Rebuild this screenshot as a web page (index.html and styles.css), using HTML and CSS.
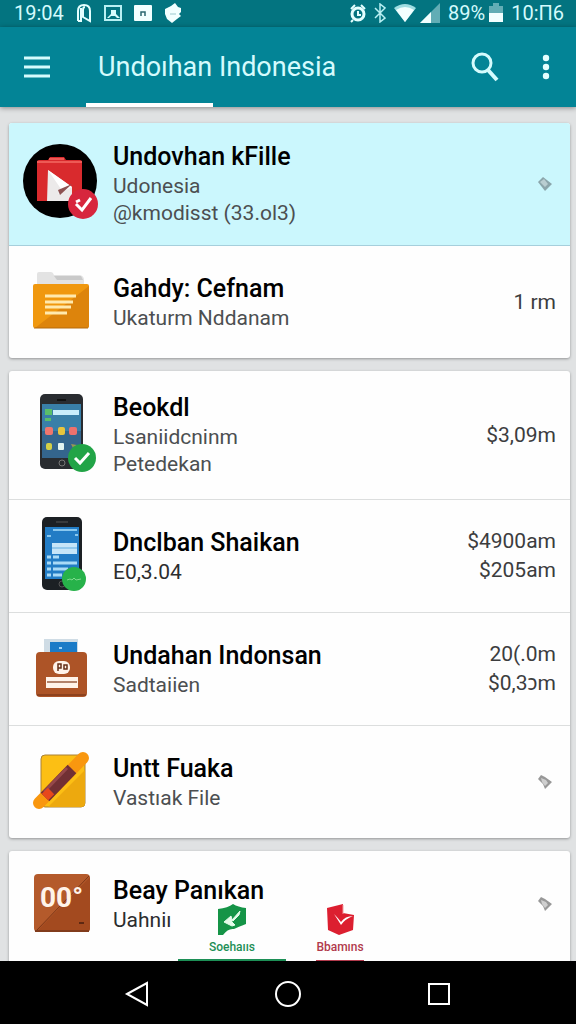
FILE: index.html
```
<!DOCTYPE html>
<html lang="id">
<head>
    <meta charset="utf-8">
    <meta name="viewport" content="width=device-width, initial-scale=1">
    <title>Undoıhan Indonesia</title>
    <link rel="stylesheet" href="styles.css">
</head>
<body>
    <div class="status-bar">
        <span>19:04</span>
        <svg class="gap-left" width="16" height="20" viewBox="0 0 16 20" fill="none" stroke="#e4ffff" stroke-width="2"><path d="M2 18V8q0-6 6-6t6 6v10l-7-4V7q0-3 2-3M5 5v13H2"/></svg>
        <svg class="gap-left" width="18" height="18" viewBox="0 0 18 18"><path d="M1 2h16v14H1z" fill="none" stroke="#b9f0f3" stroke-width="2"/><path d="M3 14l4-4V6h5v4l4 4h-3l-2-2H7l-2 2z" fill="#d5fbfd"/></svg>
        <svg class="gap-left" width="18" height="18" viewBox="0 0 18 18"><rect y="1" width="18" height="16" rx="1" fill="#f2ffff"/><path d="M7 12V8h4v4" fill="none" stroke="#2b6870" stroke-width="1.5"/></svg>
        <svg class="gap-left" width="18" height="20" viewBox="0 0 18 20"><path d="M1 6l6-3 4-3 3 4 3 1v4l-2 2 2 2-4 3-5 4-5-4-2-5z" fill="#f2ffff"/><path d="M6 11h6" stroke="#9ac8cd"/></svg>
        <span class="spacer"></span>
        <svg width="16" height="20" viewBox="0 0 16 20" fill="none" stroke="#e4ffff"><circle cx="8" cy="11" r="6" stroke-width="3"/><path d="M1 6l4-4M15 6l-4-4M3 17l-2 2M8 8v4h3" stroke-width="2"/></svg>
        <svg width="12" height="20" viewBox="0 0 12 20" fill="none" stroke="#b9f0f3" stroke-width="1.5"><path d="M1 5l10 10-5 4V1l5 4L1 15"/></svg>
        <svg width="22" height="18" viewBox="0 0 22 18"><path d="M0 4q11-8 22 0L11 18z" fill="#9fdde2"/><path d="M2 6q9-6 18 0l-9 12z" fill="#f2ffff"/></svg>
        <svg class="signal" width="20" height="20" viewBox="0 0 20 20"><path d="M0 20L20 0v20z" fill="#62adb5"/><path d="M0 20l11-11v11z" fill="#f2ffff"/></svg>
        <span>89%</span>
        <svg class="battery" width="14" height="20" viewBox="0 0 14 20"><path d="M4 0h6v3h4v7H0V3h4z" fill="#62adb5"/><path d="M0 10h14v9H0z" fill="#f2ffff"/></svg>
        <span>10:П6</span>
    </div>

    <header class="app-bar">
        <button class="icon-button" type="button" aria-label="Menu">
            <svg width="28" height="24" viewBox="0 0 28 24"><path d="M1 3h26M1 12h26M1 21h26" stroke="#d5fbfd" stroke-width="3"/></svg>
        </button>
        <h1>Undoıhan Indonesia</h1>
        <button class="icon-button" type="button" aria-label="Cari">
            <svg width="28" height="30" viewBox="0 0 28 30" fill="none" stroke="#d5fbfd"><circle cx="11" cy="11" r="9" stroke-width="3"/><path d="M17 18l9 10" stroke-width="4"/></svg>
        </button>
        <button class="icon-button more" type="button" aria-label="Lainnya">
            <svg width="8" height="26" viewBox="0 0 8 26" fill="#e4ffff"><circle cx="4" cy="4" r="3.2"/><circle cx="4" cy="13" r="3.2"/><circle cx="4" cy="22" r="3.2"/></svg>
        </button>
    </header>

    <main>
        <section class="card">
            <a class="row active" href="#">
                <svg class="picture" viewBox="0 0 76 80">
                    <circle cx="38" cy="37" r="37"/>
                    <path d="M15 18q0-2 2-2h9l2-3h14l2 3h14q2 0 2 2v39H15z" fill="#d92a2d"/>
                    <path d="M15 18h45M27 15h15" stroke="#ed5a55" stroke-width="2"/>
                    <path d="M26 26l24 17v14H25z" fill="#eceaea"/>
                    <path d="M26 26l24 17-14 7 3-5z" fill="#fff"/>
                    <path d="M36 46l14-6-12 11z" fill="#8d5252"/>
                    <circle cx="61" cy="60" r="15" fill="#d7263d"/>
                    <path d="M54 60l6 6 9-12M54 58l4-2" fill="none" stroke="#fff" stroke-width="3"/>
                </svg>
                <div class="text">
                    <h2>Undovhan kFille</h2>
                    <p>Udonesia</p>
                    <p>@kmodisst (33.ol3)</p>
                </div>
                <svg class="pointer" viewBox="0 0 16 14"><path d="M1 5l5-5 9 7-7 7z" fill="#8ba5ab"/><path d="M3 5l4-3 4 5-3 3z" fill="#b9cdd1"/></svg>
            </a>
            <a class="row" href="#">
                <svg class="picture" viewBox="0 0 76 80">
                    <path d="M15 25V12q0-2 2-2h12q2 0 3 3h26q4 1 4 5v7z" fill="#e3e3e3"/>
                    <path d="M32 14h27l2 4H35z" fill="#c9c9c9"/>
                    <rect x="11" y="22" width="56" height="44" rx="2" fill="#f0980f"/>
                    <path d="M67 24v40q0 2-2 2H13z" fill="#dd840c"/>
                    <path d="M12 66h54" stroke="#b66a0b"/>
                    <path d="M23 34h31M23 40h28M23 45h26M23 51h22" stroke="#ffe9ae" stroke-width="3"/>
                </svg>
                <div class="text">
                    <h2>Gahdy: Cefnam</h2>
                    <p>Ukaturm Nddanam</p>
                </div>
                <div class="amount">1 rm</div>
            </a>
        </section>

        <section class="card">
            <a class="row tall" href="#">
                <svg class="picture" viewBox="0 0 76 80">
                    <rect x="18" y="-1" width="43" height="75" rx="5" fill="#292c30"/>
                    <path d="M35 5h9" stroke="#111" stroke-width="2"/>
                    <path d="M20 9h39v54H20z" fill="#397fa8"/>
                    <path d="M20 36h39v27H20z" fill="#34658d"/>
                    <path d="M31 15h26v5H31z" fill="#c9edfb"/>
                    <path d="M23 14h7v6h-7zM23 23h6v3h-6z" fill="#5abf69"/>
                    <rect x="23" y="32" width="8" height="8" rx="2" fill="#f0766d"/>
                    <rect x="36" y="32" width="7" height="8" rx="2" fill="#e9c53d"/>
                    <rect x="47" y="32" width="8" height="8" rx="2" fill="#ee716d"/>
                    <rect x="24" y="48" width="6" height="7" rx="2" fill="#d2cf47"/>
                    <rect x="36" y="48" width="6" height="7" rx="1" fill="#e2f3f0"/>
                    <path d="M49 49l6 1-3 5z" fill="#9a9855"/>
                    <circle cx="40" cy="68" r="3" fill="none" stroke="#777"/>
                    <circle cx="60" cy="63" r="14" fill="#22a447"/>
                    <path d="M53 63l5 5 9-10" fill="none" stroke="#fff" stroke-width="3"/>
                </svg>
                <div class="text">
                    <h2>Beokdl</h2>
                    <p>Lsaniidcninm</p>
                    <p>Petedekan</p>
                </div>
                <div class="amount">$3,09m</div>
            </a>
            <a class="row" href="#">
                <svg class="picture" viewBox="0 0 76 80">
                    <rect x="20" y="1" width="40" height="73" rx="5" fill="#1c2024"/>
                    <path d="M34 6h12" stroke="#555"/>
                    <path d="M23 11h34v52H23z" fill="#227cc5"/>
                    <path d="M31 14h24M25 20h4M53 19h3" stroke="#8ac8ef" stroke-width="2"/>
                    <path d="M30 27h25v11H30z" fill="#c6e5f8"/>
                    <path d="M30 32h25" stroke="#93c9ec" stroke-width="2"/>
                    <path d="M25 41h4M31 41h6M25 47h4M31 47h24M25 53h4M31 53h15M25 59h4M31 59h9" stroke="#a9daf6" stroke-width="3"/>
                    <circle cx="40" cy="68" r="3" fill="none" stroke="#555"/>
                    <circle cx="52" cy="63" r="12" fill="#27b24a"/>
                    <path d="M45 64l3-1 2 1 2-2 2 2 5-1" fill="none" stroke="#7fda8e"/>
                </svg>
                <div class="text">
                    <h2>Dnclban Shaikan</h2>
                    <p class="dark">E0,3.04</p>
                </div>
                <div class="amount">$4900am<br>$205am</div>
            </a>
            <a class="row" href="#">
                <svg class="picture" viewBox="0 0 76 80">
                    <path d="M22 10h34v15H22z" fill="#cfdce5"/>
                    <path d="M28 13h27v12H28z" fill="#1b7bc7"/>
                    <path d="M37 19h3" stroke="#a3d6f8" stroke-width="2"/>
                    <rect x="14" y="23" width="51" height="45" rx="4" fill="#ad5427"/>
                    <path d="M15 66h49" stroke="#8e421e" stroke-width="2"/>
                    <rect x="31" y="32" width="17" height="13" rx="6" fill="#fff3e9"/>
                    <path d="M36 42v-7h3v4h-3M42 36h3v4h-3z" fill="none" stroke="#663019" stroke-width="1.5"/>
                    <path d="M24 48h32v11H24z" fill="#fff3e9"/>
                    <path d="M25 53h30" stroke="#b2826a" stroke-width="2"/>
                </svg>
                <div class="text">
                    <h2>Undahan Indonsan</h2>
                    <p>Sadtaiien</p>
                </div>
                <div class="amount">20(.0m<br>$0,3ɔm</div>
            </a>
            <a class="row" href="#">
                <svg class="picture" viewBox="0 0 76 80">
                    <rect x="19" y="13" width="44" height="52" rx="4" fill="#fcbf14" stroke="#aa8237"/>
                    <path d="M63 28v33q0 4-4 4H26z" fill="#eda90e"/>
                    <path d="M17 61l44-45" stroke="#f9970f" stroke-width="12" stroke-linecap="round"/>
                    <path d="M23 55l27-28" stroke="#713034" stroke-width="12"/>
                    <path d="M22 50l23-24" stroke="#95484b" stroke-width="3"/>
                    <path d="M23 55l6-6" stroke="#e7471c" stroke-width="9"/>
                </svg>
                <div class="text">
                    <h2>Untt Fuaka</h2>
                    <p>Vastıak File</p>
                </div>
                <svg class="pointer" viewBox="0 0 16 14"><path d="M1 4l3-4 4 2 7 5-7 7-2-5z" fill="#989898"/><path d="M4 3l5 2 2 3-3 3-3-4z" fill="#cfcfcf"/></svg>
            </a>
        </section>

        <section class="card">
            <a class="row last" href="#">
                <svg class="picture" viewBox="0 0 76 80">
                    <rect x="12" y="10" width="56" height="58" rx="4" fill="#b45a2b"/>
                    <path d="M68 13v51q0 4-4 4H14z" fill="#a34a1f"/>
                    <path d="M14 67l53-55" stroke="#7d3617"/>
                    <path d="M13 67h54" stroke="#813b1b" stroke-width="2"/>
                    <text class="badge-text" x="18" y="43">00°</text>
                    <path d="M57 59h5" stroke="#5e2812" stroke-width="2"/>
                </svg>
                <div class="text">
                    <h2>Beay Panıkan</h2>
                    <p class="dark">Uahniı</p>
                </div>
                <svg class="pointer" viewBox="0 0 16 14"><path d="M1 4l3-4 4 2 7 5-7 7-2-5z" fill="#989898"/><path d="M4 3l5 2 2 3-3 3-3-4z" fill="#cfcfcf"/></svg>
            </a>
        </section>

        <div class="tabs">
            <button class="tab green" type="button">
                <svg width="30" height="32" viewBox="0 0 30 32"><path d="M1 6q10-1 15-5 5 3 13 4v16q-8 3-12 5-6-1-11 6H1z" fill="#159447"/><path d="M7 19l7-6 1 4 8-9-1 4-6 6-3-1 5 5-3 1z" fill="#e4fbe9" stroke="#e4fbe9"/></svg>
                Soehaııs
            </button>
            <button class="tab red" type="button">
                <svg width="30" height="32" viewBox="0 0 30 32"><path d="M2 5l16-4v9l11 2-1 15-14 5-11-5z" fill="#dc1f30"/><path d="M9 11q4 4 7 8 4-6 12-6-8 3-12 9z" fill="#fff"/><path d="M18 2v9" stroke="#f49b9e"/></svg>
                Bbamıns
            </button>
        </div>
    </main>

    <nav class="nav-bar">
        <button type="button" aria-label="Kembali"><svg width="26" height="26" viewBox="0 0 26 26"><path d="M3 13L23 2v22z"/></svg></button>
        <button type="button" aria-label="Beranda"><svg width="26" height="26" viewBox="0 0 26 26"><circle cx="13" cy="13" r="12"/></svg></button>
        <button type="button" aria-label="Terbaru"><svg width="26" height="26" viewBox="0 0 26 26"><rect x="3" y="3" width="20" height="20"/></svg></button>
    </nav>
</body>
</html>
```
FILE: styles.css
```
* {
    box-sizing: border-box;
}

body {
    font-family: Roboto, "Noto Sans", sans-serif;
    background-color: #e0e2e3;
    color: #000;
    display: flex;
    flex-direction: column;
    height: 100vh;
    margin: 0;
    overflow: hidden;
}

h1, h2, p {
    margin: 0;
}

button {
    background: none;
    border: none;
    padding: 0;
    font-family: inherit;
    cursor: pointer;
}

svg {
    display: block;
    flex: none;
}

.status-bar {
    flex: none;
    display: flex;
    align-items: center;
    gap: 8px;
    height: 27px;
    padding: 0 12px 2px 14px;
    background-color: #037480;
    color: #d5fbfd;
    font-size: 20px;
    line-height: 24px;
}

.status-bar .gap-left {
    margin-left: 4px;
}

.status-bar .signal,
.status-bar .battery {
    margin-left: -4px;
}

.spacer {
    flex: 1;
}

.app-bar {
    flex: none;
    position: relative;
    z-index: 1;
    display: flex;
    align-items: center;
    height: 80px;
    padding: 0 26px 0 23px;
    background-color: #038496;
    box-shadow: 0 1px 5px rgba(0, 0, 0, 0.4);
}

/* indicator of the selected section */
.app-bar::after {
    content: "";
    position: absolute;
    left: 15%;
    bottom: 0;
    width: 22%;
    height: 4px;
    background-color: #fff;
}

.app-bar h1 {
    flex: 1;
    margin-left: 47px;
    color: #d5fbfd;
    font-size: 27px;
    font-weight: 400;
}

.icon-button.more {
    margin-left: 43px;
}

main {
    flex: 1;
    min-height: 0;
    position: relative;
    display: flex;
    flex-direction: column;
    gap: 13px;
    padding: 16px 6px 0 9px;
    overflow: hidden;
}

.card {
    flex: none;
    background-color: #fefefe;
    border-radius: 3px;
    box-shadow: 0 1px 3px rgba(0, 0, 0, 0.35);
    overflow: hidden;
}

/* the list goes on under the navigation bar */
.card:last-of-type {
    padding-bottom: 12px;
}

.row {
    display: flex;
    align-items: center;
    gap: 15px;
    min-height: 113px;
    padding: 0 14px 0 13px;
    color: inherit;
    text-decoration: none;
}

.row + .row {
    border-top: 1px solid #dcdede;
}

.row.active {
    min-height: 122px;
    background-color: #cbf7fd;
}

.row.active + .row {
    border-top-color: #a6cfdc;
}

.row.tall {
    min-height: 128px;
}

.row.last {
    min-height: 106px;
}

.picture {
    width: 76px;
    height: 80px;
    overflow: visible;
}

.badge-text {
    fill: #fff3e9;
    font-size: 28px;
    font-weight: 700;
}

.text {
    flex: 1;
    min-width: 0;
}

.text h2 {
    font-size: 25px;
    font-weight: 500;
    line-height: 32px;
}

.text p {
    color: #4c4f51;
    font-size: 21px;
    line-height: 27px;
}

.text p.dark {
    color: #2c2d2e;
}

.amount {
    color: #3c3d3e;
    font-size: 21px;
    line-height: 29px;
    text-align: right;
}

.pointer {
    width: 16px;
    height: 14px;
    margin-right: 3px;
}

.tabs {
    position: absolute;
    left: 0;
    right: 0;
    bottom: 0;
    display: flex;
    justify-content: center;
    padding-right: 4px;
}

.tab {
    display: flex;
    flex-direction: column;
    align-items: center;
    gap: 4px;
    width: 108px;
    padding-bottom: 6px;
    font-size: 12px;
    font-weight: 500;
    line-height: 16px;
}

.tab.green {
    background: linear-gradient(#1d8f56, #1d8f56) center bottom / 100% 2px no-repeat;
    color: #1d8f56;
}

.tab.red {
    background: linear-gradient(#b13a4c, #b13a4c) center bottom / 48px 1px no-repeat;
    color: #b13a4c;
}

.nav-bar {
    flex: none;
    display: flex;
    justify-content: center;
    gap: 125px;
    height: 63px;
    background-color: #000;
}

.nav-bar button {
    padding-top: 2px;
}

.nav-bar svg {
    fill: none;
    stroke: #fff;
    stroke-width: 2;
}
```
